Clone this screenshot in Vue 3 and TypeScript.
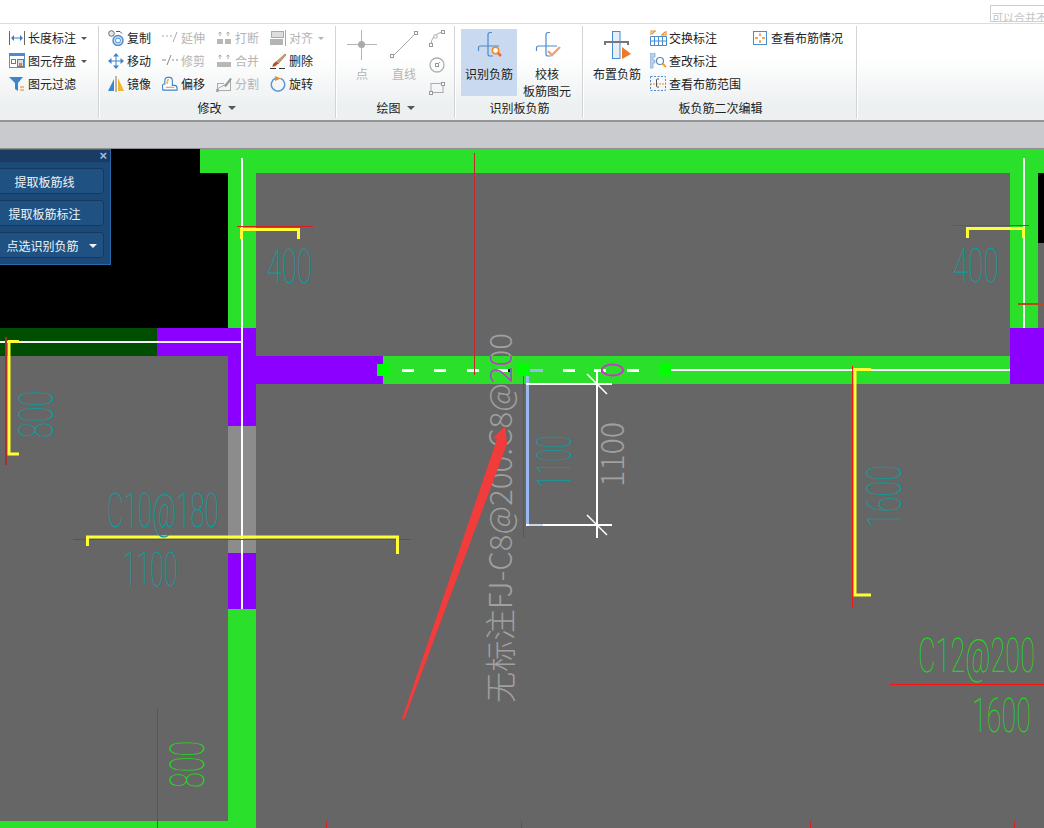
<script setup lang="ts">
interface CadLabel {
  text: string
  x: number
  y: number
  sx: number
  color: string
  vertical?: boolean
}

const teal = '#0c9c9c'
const green = '#24d424'

// x,y is the baseline start of each drawing label, in page coordinates.
// sx squeezes the glyphs, CAD text is much narrower than any installed font.
const labels: CadLabel[] = [
  { text: '400', x: 267, y: 283, sx: 0.57, color: teal },
  { text: '400', x: 953, y: 282, sx: 0.58, color: teal },
  { text: 'C10@180', x: 107, y: 527, sx: 0.54, color: teal },
  { text: '1100', x: 123, y: 586, sx: 0.52, color: teal },
  { text: 'C12@200', x: 918, y: 672, sx: 0.565, color: green },
  { text: '1600', x: 972, y: 732, sx: 0.56, color: green },
  { text: '800', x: 53, y: 438, sx: 0.6, color: teal, vertical: true },
  { text: '1100', x: 571, y: 488, sx: 0.5, color: teal, vertical: true },
  { text: '1600', x: 901, y: 528, sx: 0.6, color: teal, vertical: true },
  { text: '800', x: 204, y: 788, sx: 0.6, color: green, vertical: true }
]

const dashes = [402, 434, 467, 498, 563, 594, 627]
const nodes = [377, 518, 659]
const redTicks = [326, 521, 810, 1014]

function labelTransform(l: CadLabel) {
  const turn = l.vertical ? ' rotate(-90)' : ''
  return `translate(${l.x} ${l.y})${turn} scale(${l.sx} 1)`
}
</script>

<template>
  <div class="app">
    <div class="topbar">
      <div class="thumb">可以合并不</div>
    </div>

    <div class="ribbon">
      <section class="group g1">
        <div class="rows">
          <div class="tool">
            <svg class="ico" viewBox="0 0 16 16"><path d="M.5 1v14M15.500 1v14" stroke="#666" fill="none" /><path d="M4 8h8" stroke="#3a80c8" /><path d="M2 8l3-3v6zM14 8l-3-3v6z" fill="#3a80c8" /></svg>
            <span>长度标注</span><i class="caret" />
          </div>
          <div class="tool">
            <svg class="ico" viewBox="0 0 16 16"><rect x=".5" y=".5" width="15" height="14" fill="#fff" stroke="#5a92cc" /><rect x="0" y="0" width="16" height="3" fill="#4a8ad0" /><rect x="2.500" y="6.500" width="4" height="4" fill="none" stroke="#777" /><rect x="8.500" y="6.500" width="6" height="7" fill="#ddd" stroke="#777" /><rect x="10" y="10" width="3" height="3" fill="#e8802a" /></svg>
            <span>图元存盘</span><i class="caret" />
          </div>
          <div class="tool">
            <svg class="ico" viewBox="0 0 16 16"><path d="M0 1h14L9 7v8L6 13V7z" fill="#3d86cc" /><path d="M11 11h4M11 14h4" stroke="#e8802a" /></svg>
            <span>图元过滤</span>
          </div>
        </div>
      </section>

      <section class="group g2">
        <div class="grid">
          <div class="tool">
            <svg class="ico" viewBox="0 0 16 16"><circle cx="3.500" cy="3.500" r="2.800" fill="#e8e8e8" stroke="#666" /><path d="M8 1.500h4l2 2" stroke="#555" fill="none" /><circle cx="10" cy="10.500" r="5" fill="#cfe2f5" stroke="#4a8ad0" stroke-width="1.400" /><circle cx="10" cy="10.500" r="2.500" fill="#fff" stroke="#4a8ad0" /></svg>
            <span>复制</span>
          </div>
          <div class="tool off">
            <svg class="ico" viewBox="0 0 16 16"><path d="M0 6h2M4 6h2M8 6h2" stroke="#aaa" fill="none" /><path d="M11 12l4-10" stroke="#aaa" fill="none" /></svg>
            <span>延伸</span>
          </div>
          <div class="tool off">
            <svg class="ico" viewBox="0 0 16 16"><rect x="1" y="9" width="6" height="5" fill="#b8b8b8" /><rect x="9" y="9" width="6" height="5" fill="#b8b8b8" /><path d="M4 6V2M2.500 3.500L4 2l1.500 1.500M12 6V2M10.500 3.500L12 2l1.500 1.500" stroke="#aaa" fill="none" /></svg>
            <span>打断</span>
          </div>
          <div class="tool off">
            <svg class="ico" viewBox="0 0 16 16"><rect x="1.500" y="1.500" width="12" height="6" fill="#ddd" stroke="#aaa" /><rect x="0" y="9" width="13" height="6" fill="#b4b4b4" /><path d="M15.500 0v16" stroke="#aaa" /></svg>
            <span>对齐</span><i class="caret light" />
          </div>

          <div class="tool">
            <svg class="ico" viewBox="0 0 16 16"><path d="M8 3v10M3 8h10" stroke="#3d86cc" /><path d="M8 0l3 3.500H5zM8 16l3-3.500H5zM0 8l3.500-3v6zM16 8l-3.500-3v6z" fill="#3d86cc" /></svg>
            <span>移动</span>
          </div>
          <div class="tool off">
            <svg class="ico" viewBox="0 0 16 16"><path d="M0 7h4M10 7h2M14 7h2" stroke="#888" fill="none" /><path d="M5 12l4-10" stroke="#888" fill="none" /></svg>
            <span>修剪</span>
          </div>
          <div class="tool off">
            <svg class="ico" viewBox="0 0 16 16"><rect x="1" y="9" width="14" height="5" fill="#b8b8b8" /><path d="M4 6V2M2.500 3.500L4 2l1.500 1.500M12 6V2M10.500 3.500L12 2l1.500 1.500" stroke="#aaa" fill="none" /></svg>
            <span>合并</span>
          </div>
          <div class="tool">
            <svg class="ico" viewBox="0 0 16 16"><path d="M15 1l-9 8 2 2 8-9z" fill="#c9a070" stroke="#8a6a45" stroke-width=".6" /><path d="M6 8.500L3 11l-.5 3 3-1 3-2.500z" fill="#b5502a" /><path d="M0 15.500h6M9 15.500h6" stroke="#333" /></svg>
            <span>删除</span>
          </div>

          <div class="tool">
            <svg class="ico" viewBox="0 0 16 16"><path d="M0 15L6 3v12z" fill="#3d86cc" /><path d="M8 0v16" stroke="#777" /><path d="M10 2l6 13h-6z" fill="#f5b52a" /></svg>
            <span>镜像</span>
          </div>
          <div class="tool">
            <svg class="ico" viewBox="0 0 17 16"><path d="M1 14.500h15v-2q0-3-3-3h-2V5q0-4-3-4H6Q3 1 3 5v3H2q-1.500 0-1.500 3z" fill="#fff" stroke="#3d86cc" stroke-width="1.200" /><path d="M4 11.500h9M5.500 8V5q0-1.500 2-1.500" fill="none" stroke="#f2b02c" stroke-width="1.400" /></svg>
            <span>偏移</span>
          </div>
          <div class="tool off">
            <svg class="ico" viewBox="0 0 16 16"><path d="M1 7.500h7M1 14.500h14M1.500 7v8M14.500 3v12M1 13l9-5" stroke="#aaa" fill="none" /><path d="M8 10l6-8 2 1-6 8z" fill="#999" /><rect x="0" y="13" width="3" height="3" fill="#aaa" /></svg>
            <span>分割</span>
          </div>
          <div class="tool">
            <svg class="ico" viewBox="0 0 16 16"><path d="M5.500 2.300A6.700 6.700 0 1 0 10.500 2.300" fill="none" stroke="#5a98d8" stroke-width="1.500" /><path d="M5 0l6 2.500L5 5z" fill="#f08a24" /></svg>
            <span>旋转</span>
          </div>
        </div>
        <div class="label">修改<i class="caret dark" /></div>
      </section>

      <section class="group g3">
        <div class="body">
          <div class="big off w30">
            <div class="pic">
              <svg width="30" height="30" viewBox="0 0 30 30"><path d="M0 14.500h30M14.500 0v30" stroke="#b4b4b4" /><circle cx="14.500" cy="14.500" r="3.500" fill="#aaa" /></svg>
            </div>
            <span>点</span>
          </div>
          <div class="big off w32">
            <div class="pic">
              <svg width="32" height="30" viewBox="0 0 32 30"><path d="M5 26L27 4" stroke="#a8a8a8" /><rect x="2.500" y="24.500" width="3" height="3" fill="#fff" stroke="#999" /><rect x="26.500" y="1.500" width="3" height="3" fill="#fff" stroke="#999" /></svg>
            </div>
            <span>直线</span>
          </div>
          <div class="minis">
            <svg width="16" height="17" viewBox="0 0 16 17"><path d="M2 15Q2 5 13 2" fill="none" stroke="#aaa" /><rect x=".5" y="13.500" width="3" height="3" fill="#fff" stroke="#999" /><rect x="12.500" y=".5" width="3" height="3" fill="#fff" stroke="#999" /><rect x="5" y="5" width="3" height="3" fill="#fff" stroke="#bbb" /></svg>
            <svg width="16" height="16" viewBox="0 0 16 16"><circle cx="8" cy="8" r="7" fill="none" stroke="#b0b0b0" stroke-width="1.300" /><path d="M8 8l3-3" stroke="#aaa" /><rect x="6.500" y="6.500" width="3" height="3" fill="#fff" stroke="#999" /></svg>
            <svg width="16" height="13" viewBox="0 0 16 13"><rect x="2" y="1.500" width="12" height="9" fill="none" stroke="#aaa" /><rect x=".5" y="9.500" width="3" height="3" fill="#fff" stroke="#999" /><rect x="12.500" y=".5" width="3" height="3" fill="#fff" stroke="#999" /></svg>
          </div>
        </div>
        <div class="label">绘图<i class="caret dark" /></div>
      </section>

      <section class="group g4">
        <div class="body">
          <div class="big w56 active">
            <div class="pic">
              <svg width="30" height="30" viewBox="0 0 30 30"><path d="M18 2.500h-2a2 2 0 0 0-2 2V24a2 2 0 0 0 2 2h3M4.500 21v-3a2 2 0 0 1 2-2H25" fill="none" stroke="#4a8ad0" stroke-width="1.200" /><circle cx="21.500" cy="20.500" r="3.200" fill="#fff" stroke="#f08a24" stroke-width="1.500" /><path d="M24 23l3 3" stroke="#e8702a" stroke-width="2.500" /></svg>
            </div>
            <span>识别负筋</span>
          </div>
          <div class="big w56">
            <div class="pic">
              <svg width="30" height="30" viewBox="0 0 30 30"><path d="M18 2.500h-2a2 2 0 0 0-2 2V24a2 2 0 0 0 2 2h3M4.500 21v-3a2 2 0 0 1 2-2H25" fill="none" stroke="#4a8ad0" stroke-width="1.200" /><path d="M16 21l4 4 8-8" fill="none" stroke="#f0a080" stroke-width="2.400" /></svg>
            </div>
            <span>校核</span>
            <span>板筋图元</span>
          </div>
        </div>
        <div class="label">识别板负筋</div>
      </section>

      <section class="group g5">
        <div class="body">
          <div class="big w48">
            <div class="pic">
              <svg width="30" height="30" viewBox="0 0 30 30"><rect x="10.500" y="1.500" width="7.500" height="27" fill="#e6eef8" stroke="#4a8ad0" /><path d="M3 15v-3h23v3" fill="none" stroke="#777" stroke-width="2" /><path d="M20 17l9 7-9 5z" fill="#ee7a26" /></svg>
            </div>
            <span>布置负筋</span>
          </div>
          <div class="col wide">
            <div class="tool">
              <svg class="ico lg" viewBox="0 0 17 16"><path d="M1 5V1h5M2 4l3-3M16 1v4h-5M15 2l-3 3" fill="none" stroke="#f08a24" stroke-width="1.100" /><path d="M.5 6.500h16v9H.5zM.5 11h16M4.500 6.500v9M8.500 6.500v9M12.500 6.500v9" fill="none" stroke="#4a8ad0" /></svg>
              <span>交换标注</span>
            </div>
            <div class="tool">
              <svg class="ico lg" viewBox="0 0 17 16"><path d="M0 0h5v4H3v3h2v3H3v5H0z" fill="#b9d2ee" stroke="#6a9ad0" stroke-width=".6" /><circle cx="10" cy="8" r="3.500" fill="#fff" stroke="#5a8ac0" stroke-width="1.200" /><path d="M12.500 10.500l3.500 3.500" stroke="#f0a030" stroke-width="2" /></svg>
              <span>查改标注</span>
            </div>
            <div class="tool">
              <svg class="ico lg" viewBox="0 0 17 16"><rect x=".5" y=".5" width="15" height="14" fill="none" stroke="#4a8ad0" stroke-dasharray="2 1.500" /><path d="M0 8h16" stroke="#f08a24" stroke-dasharray="2 1" /><path d="M9 3H7.500Q6.500 3 6.500 4v6q0 1 1 1H9" fill="none" stroke="#555" /></svg>
              <span>查看布筋范围</span>
            </div>
          </div>
          <div class="col">
            <div class="tool">
              <svg class="ico sm" viewBox="0 0 14 14"><rect x=".5" y=".5" width="13" height="13" fill="#fff" stroke="#4a8ad0" /><path d="M7 2v3M7 9v3M2 7h3M9 7h3" stroke="#f08a24" stroke-width="1.400" /></svg>
              <span>查看布筋情况</span>
            </div>
          </div>
        </div>
        <div class="label">板负筋二次编辑</div>
      </section>
    </div>

    <div class="strip" />

    <div class="canvas">
      <svg class="drawing" width="1044" height="679" viewBox="0 149 1044 679">
        <defs>
          <!-- the note turns magenta where it crosses the green beam -->
          <linearGradient id="note" gradientUnits="userSpaceOnUse" x1="0" y1="0" x2="370" y2="0">
            <stop offset="0.862" stop-color="#a0a0a0" />
            <stop offset="0.862" stop-color="#c43cc4" />
            <stop offset="0.938" stop-color="#c43cc4" />
            <stop offset="0.938" stop-color="#a0a0a0" />
          </linearGradient>
        </defs>

        <g shape-rendering="crispEdges">
          <rect x="0" y="149" width="1044" height="679" fill="#666" />
          <rect x="0" y="149" width="228" height="179" fill="#000" />
          <rect x="1038" y="173" width="6" height="70" fill="#000" />

          <rect x="200" y="149" width="844" height="24" fill="#2be02b" />
          <rect x="228" y="173" width="28" height="155" fill="#2be02b" />
          <rect x="1010" y="173" width="28" height="155" fill="#2be02b" />
          <rect x="383" y="356" width="627" height="28" fill="#2be02b" />
          <rect x="228" y="609" width="28" height="219" fill="#2be02b" />
          <rect x="0" y="821" width="228" height="7" fill="#2be02b" />

          <rect x="0" y="328" width="157" height="28" fill="#004f00" />
          <rect x="157" y="328" width="99" height="28" fill="#8c00ff" />
          <rect x="228" y="356" width="28" height="70" fill="#8c00ff" />
          <rect x="256" y="356" width="127" height="28" fill="#8c00ff" />
          <rect x="1010" y="328" width="34" height="56" fill="#8c00ff" />
          <rect x="228" y="426" width="28" height="127" fill="#8c8c8c" />
          <rect x="228" y="553" width="28" height="56" fill="#8c00ff" />

          <rect x="241" y="158" width="2" height="451" fill="#fff" />
          <rect x="1023" y="158" width="2" height="170" fill="#eef5ee" />
          <rect x="0" y="341" width="243" height="2" fill="#f4f4f4" />
          <rect x="670" y="369" width="340" height="2" fill="#fff" />

          <rect v-for="d in dashes" :key="d" :x="d" y="369" width="12" height="3" fill="#fff" />
          <rect x="530" y="369" width="13" height="3" fill="#9ab8f0" />
          <rect v-for="n in nodes" :key="n" :x="n" y="364" width="12" height="12" fill="#00ff00" />
          <rect x="508" y="369" width="2" height="3" fill="#111" />
          <rect x="601" y="369" width="2" height="3" fill="#111" />

          <rect x="474" y="153" width="1" height="222" fill="#c02a2a" />
          <rect x="523" y="376" width="1" height="162" fill="#e01c1c" />
          <rect x="237" y="226" width="76" height="1" fill="#d42020" />
          <rect x="953" y="225" width="76" height="1" fill="#f01c1c" />
          <rect x="1018" y="303" width="26" height="2" fill="#b84a20" />
          <rect x="5" y="337" width="2" height="128" fill="#a83030" />
          <rect x="852" y="366" width="1" height="242" fill="#f01818" />
          <rect x="73" y="539" width="338" height="1" fill="#d42020" />
          <rect x="157" y="708" width="1" height="120" fill="#e01c1c" />
          <rect x="890" y="684" width="154" height="1" fill="#ff1010" />
          <rect v-for="t in redTicks" :key="t" :x="t" y="821" width="1" height="7" fill="#e01c1c" />

          <rect x="526" y="376" width="3" height="148" fill="#9ab8f0" />
          <rect x="526" y="383" width="86" height="2" fill="#fff" />
          <rect x="526" y="524" width="86" height="2" fill="#fff" />
          <rect x="529" y="524" width="14" height="2" fill="#c8d6ee" />
          <rect x="596" y="371" width="2" height="167" fill="#fff" />
        </g>

        <path d="M587 374l20 20M587 515l20 20" stroke="#fff" stroke-width="1.500" />
        <ellipse cx="612.500" cy="370" rx="10.500" ry="5.500" fill="none" stroke="#c43cc4" stroke-width="2" />

        <g fill="none" stroke="#ffff33" stroke-width="3">
          <path d="M241.500 239v-9.500h57V239" />
          <path d="M967.500 238v-9.500h56V238" />
          <path d="M19 341.500H9V454H19" />
          <path d="M87.500 546v-9h310v17" />
          <path d="M871 369.500H855V595H871" />
        </g>

        <text
          v-for="l in labels"
          :key="l.text + l.x"
          class="cad"
          :transform="labelTransform(l)"
          font-size="48"
          :fill="l.color"
        >{{ l.text }}</text>

        <text
          class="note"
          transform="translate(512 703) rotate(-90)"
          font-size="31"
          textLength="370"
          lengthAdjust="spacingAndGlyphs"
          fill="url(#note)"
        >无标注FJ-C8@200.C8@200</text>
        <text
          class="note"
          transform="translate(624 487) rotate(-90)"
          font-size="32"
          textLength="65"
          lengthAdjust="spacingAndGlyphs"
          fill="#a0a0a0"
        >1100</text>

        <path d="M402 719L497 439 493 438 505 426 507 444 404.500 719z" fill="#f23c3c" />
      </svg>

      <aside class="panel">
        <header class="panel-head"><span class="close">×</span></header>
        <button class="pbtn">提取板筋线</button>
        <button class="pbtn">提取板筋标注</button>
        <button class="pbtn split"><span>点选识别负筋</span><i class="pcaret" /></button>
      </aside>
    </div>
  </div>
</template>

<style>
html, body { margin: 0; background: #fff; overflow: hidden; }
</style>

<style scoped>
.app {
  width: 1044px;
  height: 828px;
  display: flex;
  flex-direction: column;
  overflow: hidden;
  font-family: "Noto Sans CJK SC", "Noto Sans", sans-serif;
  font-size: 12px;
  color: #222;
}
.topbar {
  height: 18px;
  background: #fff;
  border-bottom: 1px solid #dcdcdc;
  display: flex;
  justify-content: flex-end;
  align-items: flex-start;
  padding-top: 5px;
  flex: none;
}
.thumb {
  width: 54px;
  height: 17px;
  box-sizing: border-box;
  border: 1px solid #cfcfcf;
  border-right: 0;
  overflow: hidden;
  color: #c4c4c4;
  font-size: 11px;
  line-height: 14px;
  white-space: nowrap;
  padding: 4px 0 0 1px;
}

.ribbon {
  height: 96px;
  flex: none;
  display: flex;
  padding-top: 2px;
  box-sizing: border-box;
  background: linear-gradient(180deg, #fff 0%, #fff 35%, #edf0f1 85%, #edf0f1 100%);
}
.group {
  box-sizing: border-box;
  height: 92px;
  border-right: 1px solid #d2d4d6;
  box-shadow: 1px 0 0 #fff;
  flex: none;
  display: flex;
  flex-direction: column;
  position: relative;
}
.g1 { width: 99px; padding-left: 9px; }
.g2 { width: 237px; padding-left: 9px; }
.g3 { width: 119px; padding-left: 11px; }
.g4 { width: 128px; padding-left: 6px; }
.g5 { width: 274px; padding-left: 10px; }

.rows { display: flex; flex-direction: column; }
.grid { display: grid; grid-template-columns: repeat(4, 54px); }
.tool {
  height: 23px;
  display: flex;
  align-items: center;
  white-space: nowrap;
}
.off { color: #b4b4b4; }
.ico { width: 16px; height: 16px; margin-right: 3px; flex: none; }
.ico.lg { width: 17px; margin-right: 2px; }
.ico.sm { width: 14px; height: 14px; margin-right: 4px; }
.caret {
  width: 0;
  height: 0;
  margin-left: 5px;
  margin-top: 1px;
  border-left: 3px solid transparent;
  border-right: 3px solid transparent;
  border-top: 3px solid #555;
}
.caret.light { border-top-color: #b4b4b4; }
.caret.dark {
  margin-left: 6px;
  border-left-width: 4px;
  border-right-width: 4px;
  border-top-width: 4px;
}

.body { display: flex; height: 70px; }
.big {
  display: flex;
  flex-direction: column;
  align-items: center;
  flex: none;
  white-space: nowrap;
  line-height: 17px;
}
.big .pic {
  height: 39px;
  padding-top: 4px;
  box-sizing: border-box;
  flex: none;
}
.big svg { display: block; }
.w30 { width: 30px; }
.w32 { width: 32px; margin-left: 11px; }
.w48 { width: 48px; }
.w56 { width: 56px; }
.w56 + .w56 { margin-left: 2px; }
.big.active { background: #c9d9ef; margin-top: 3px; height: 67px; }
.big.active .pic { height: 36px; padding-top: 1px; }
.minis {
  margin-left: 9px;
  width: 16px;
  height: 65px;
  padding-top: 4px;
  display: flex;
  flex-direction: column;
  justify-content: space-between;
}
.minis svg { display: block; }
.col { display: flex; flex-direction: column; margin-left: 9px; }
.col.wide { width: 94px; }
.label {
  margin-top: auto;
  height: 21px;
  line-height: 20px;
  display: flex;
  align-items: center;
  justify-content: center;
  white-space: nowrap;
  position: relative;
}
.g2 .label, .g3 .label { left: -5px; }
.g4 .label { left: -2px; }
.g5 .label { left: -4px; }

.strip {
  height: 29px;
  flex: none;
  box-sizing: border-box;
  background: #c8cacd;
  border-top: 2px solid #959595;
  border-bottom: 1px solid #8f8f8f;
}

.canvas { position: relative; flex: 1; min-height: 0; background: #666; }
.drawing { display: block; }
.cad {
  font-family: Roboto, "Liberation Sans", sans-serif;
  font-weight: 100;
  text-rendering: geometricPrecision;
}
.note {
  font-family: "Noto Sans CJK SC", "Noto Sans", sans-serif;
  font-weight: 300;
}

.panel {
  position: absolute;
  left: -22px;
  top: 0;
  width: 133px;
  height: 116px;
  box-sizing: border-box;
  background: #1c4a78;
  border: 1px solid #2a6aa8;
  display: flex;
  flex-direction: column;
  align-items: center;
}
.panel-head {
  align-self: stretch;
  height: 12px;
  background: #1a3c62;
  margin-bottom: 6px;
  position: relative;
}
.close {
  position: absolute;
  right: 3px;
  top: -2px;
  font: bold 13px/16px "Liberation Sans", sans-serif;
  color: #9cc0e0;
}
.pbtn {
  width: 119px;
  height: 26px;
  margin: 0 0 6px;
  padding: 0;
  box-sizing: border-box;
  background: #1f5282;
  border: 1px solid #17395f;
  border-radius: 3px;
  color: #eef3f8;
  font: 12px "Noto Sans CJK SC", sans-serif;
  display: flex;
  align-items: center;
  justify-content: center;
  position: relative;
}
.pbtn.split span { position: relative; left: -2px; }
.pcaret {
  position: absolute;
  right: 6px;
  top: 11px;
  width: 0;
  height: 0;
  border-left: 4px solid transparent;
  border-right: 4px solid transparent;
  border-top: 4px solid #f0f4f8;
}
</style>
